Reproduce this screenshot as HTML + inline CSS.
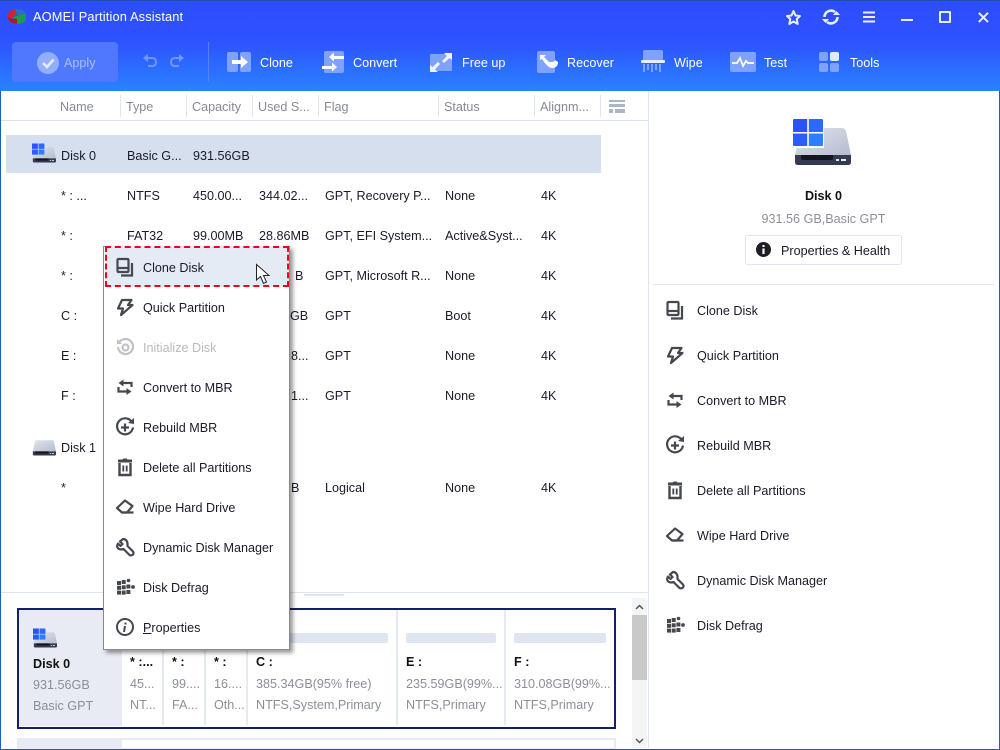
<!DOCTYPE html>
<html><head><meta charset="utf-8"><style>
html,body{margin:0;padding:0;background:#fff}
#p{position:relative;width:1000px;height:750px;overflow:hidden;background:#fff;font:12.6px/16px "Liberation Sans",sans-serif;color:#1a1a2a}
#p div{position:absolute;white-space:nowrap}
#p svg{position:absolute;overflow:visible}
.g{color:#8b8f99}
.h{color:#858a94;top:99px}
.w{color:#fff;top:55px}
.b{font-weight:bold;color:#111}
.s{position:absolute;background:#dfe5f0}
</style></head><body><div id="p">
<svg width="0" height="0" style="position:absolute"><defs>
<linearGradient id="dk" x1="0" y1="0" x2="1" y2="1"><stop offset="0" stop-color="#e0e4ec"/><stop offset="1" stop-color="#b4bcd0"/></linearGradient>
<symbol id="dbase" viewBox="0 0 58 46">
<path d="M8 9H49Q52 9 53 12L58 36H2Z" fill="url(#dk)"/>
<path d="M2 36H58V43Q58 46 55 46H5Q2 46 2 43Z" fill="#343a50"/>
<path d="M8 36H40V39Q40 41 38 41H10Q8 41 8 39Z" fill="#14161f"/>
<rect x="43" y="40" width="3" height="2" fill="#cfe0ff"/><rect x="48" y="40" width="5" height="2" fill="#e6efff"/>
</symbol>
<symbol id="dwin" viewBox="0 0 58 46">
<path d="M0 1Q0 0 1 0H14.200V13H0Z" fill="#2b52ff"/><path d="M15.800 0H29Q30 0 30 1V13H15.800Z" fill="#2a6aff"/>
<path d="M0 14.500H14.200V27H1Q0 27 0 26Z" fill="#2b5cff"/><path d="M15.800 14.500H30V26Q30 27 29 27H15.800Z" fill="#2a80ff"/>
</symbol>
<symbol id="i-clone" viewBox="0 0 20 20"><g fill="none" stroke="#45484f" stroke-width="2.200"><rect x="2.500" y="2" width="11" height="13" rx="1"/><path d="M3 11H13"/><path d="M17 6V18.500H6"/></g></symbol>
<symbol id="i-flash" viewBox="0 0 20 20"><path d="M7 3H16.500L13 8H17.500L6 18L8 11.500H3Z" fill="none" stroke="#45484f" stroke-width="2.200" stroke-linejoin="round"/></symbol>
<symbol id="i-init" viewBox="0 0 20 20"><g fill="none" stroke="#c0c2c7" stroke-width="2.200"><path d="M4.500 5A7.500 7.500 0 1 1 3 10"/><circle cx="10.500" cy="10.500" r="3"/></g><path d="M2 2V7H7Z" fill="#c0c2c7"/></symbol>
<symbol id="i-conv" viewBox="0 0 20 20"><g fill="none" stroke="#45484f" stroke-width="2.200"><path d="M8 6H16.500V10"/><path d="M3.500 10V14.500H12"/></g><path d="M8.500 2.500V9.500L3.500 6ZM11.500 11V18L16.500 14.500Z" fill="#45484f"/></symbol>
<symbol id="i-reb" viewBox="0 0 20 20"><g fill="none" stroke="#45484f" stroke-width="2.200"><path d="M16.500 4.500A8 8 0 1 0 18 10.500"/><path d="M10 6.500V14.500M6 10.500H14"/></g><path d="M13 6L19 7V1Z" fill="#45484f"/></symbol>
<symbol id="i-del" viewBox="0 0 20 20"><g fill="none" stroke="#45484f"><path d="M4.500 6V18H15.500V6" stroke-width="2.400"/><path d="M8.300 8.500V14.500M11.700 8.500V14.500" stroke-width="1.800"/></g><path d="M3 2.500H7.500L8.500 1.500H11.500L12.500 2.500H17V5.500H3Z" fill="#45484f"/></symbol>
<symbol id="i-wipe" viewBox="0 0 20 20"><path d="M2 11L10 3.500L17.500 9L12 15.500H7Z" fill="none" stroke="#45484f" stroke-width="2.200" stroke-linejoin="round"/><path d="M7 15.500H18.500" stroke="#45484f" stroke-width="2.200"/></symbol>
<symbol id="i-wr" viewBox="0 0 20 20"><path d="M8 2L5 4.500L7.500 7L5.500 9L3 6.500L2 9Q2.500 12.500 6.500 12.500L8.500 12L14.500 18Q16.500 19 18 17.500Q19 16 18 14.500L12.500 9L12.500 6Q11.500 2 8 2Z" fill="none" stroke="#45484f" stroke-width="2.200" stroke-linejoin="round"/></symbol>
<symbol id="i-def" viewBox="0 0 20 20"><g fill="#45484f"><rect x="2" y="4" width="4" height="4"/><rect x="6.700" y="3" width="4" height="4"/><circle cx="13.500" cy="3.500" r="1.800"/><rect x="2" y="8.800" width="4" height="4"/><rect x="6.700" y="8.300" width="4" height="4"/><rect x="11.400" y="7.500" width="4" height="4"/><circle cx="18" cy="10" r="1.900"/><rect x="2" y="13.600" width="4" height="4"/><rect x="6.700" y="13.600" width="4" height="4"/><rect x="11.400" y="13" width="4" height="4"/></g></symbol>
<symbol id="i-info" viewBox="0 0 20 20"><circle cx="10" cy="10" r="8" fill="none" stroke="#45484f" stroke-width="2"/><path d="M10.500 5.500V7.500M10 9L9 15" stroke="#45484f" stroke-width="2" fill="none"/></symbol>
</defs></svg>

<!-- header -->
<div style="left:0;top:0;width:1000px;height:91px;background:linear-gradient(#2d4dff 0,#2e52ff 45%,#2a82ff 100%)"></div>
<svg style="left:8px;top:8px" width="18" height="17" viewBox="0 0 18 17"><path d="M0 7Q1 2 7 1L9 6L3 10L0 10Z" fill="#d2232a"/><path d="M7 1Q14 0 18 5L15 8L9 7Z" fill="#2a6fc0"/><path d="M5 9L15 6L18 6V11Q17 15 9 16V11L5 11Z" fill="#1e9a48"/><path d="M0 10L9 11V16Q2 15 0 11Z" fill="#a81e24"/></svg>
<div style="left:33px;top:9px;color:#fff;font-size:12.8px;letter-spacing:.15px">AOMEI Partition Assistant</div>

<svg style="left:785px;top:9px" width="17" height="17" viewBox="0 0 17 17"><path d="M8.500 2L10.500 6.500L15 7L11.700 10L12.700 15L8.500 12.500L4.300 15L5.300 10L2 7L6.500 6.500Z" fill="none" stroke="#e8eeff" stroke-width="2" stroke-linejoin="round"/></svg>
<svg style="left:822px;top:8px" width="18" height="18" viewBox="0 0 18 18"><g fill="none" stroke="#e8eeff" stroke-width="2.600"><path d="M2.500 9A6.500 6.500 0 0 1 13 4"/><path d="M15.500 9A6.500 6.500 0 0 1 5 14"/></g><path d="M11 7H18L14.500 3ZM0 11H7L3.500 15Z" fill="#e8eeff"/></svg>
<svg style="left:863px;top:11px" width="13" height="12" viewBox="0 0 13 12"><path d="M0 1.500H12M0 6H12M0 10.500H12" stroke="#e8eeff" stroke-width="2"/></svg>
<div style="left:901px;top:19px;width:12px;height:2px;background:#e8eeff"></div>
<div style="left:939px;top:11px;width:8px;height:8px;border:2px solid #e8eeff;border-radius:1px"></div>
<svg style="left:978px;top:12px" width="11" height="11" viewBox="0 0 11 11"><path d="M.8 .8L10 10M10 .8L.8 10" stroke="#e8eeff" stroke-width="2"/></svg>

<!-- toolbar -->
<div style="left:12px;top:42px;width:106px;height:40px;background:#4f78ff;border-radius:4px"></div>
<svg style="left:37px;top:52px" width="22" height="22" viewBox="0 0 22 22"><circle cx="11" cy="11" r="11" fill="#93aeff"/><path d="M6 11L10 15L16.500 7.500" fill="none" stroke="#e4ebff" stroke-width="2.500"/></svg>
<div class="w" style="left:64px;color:#a9bfff">Apply</div>
<svg style="left:142px;top:54px" width="16" height="14" viewBox="0 0 16 14"><path d="M3 4H10Q14 4 14 8T10 12H6" fill="none" stroke="#6f97ff" stroke-width="2"/><path d="M6 0L1 4L6 8Z" fill="#6f97ff"/></svg>
<svg style="left:169px;top:54px" width="16" height="14" viewBox="0 0 16 14"><path d="M13 4H6Q2 4 2 8T6 12H10" fill="none" stroke="#6f97ff" stroke-width="2"/><path d="M10 0L15 4L10 8Z" fill="#6f97ff"/></svg>
<div style="left:208px;top:42px;width:1px;height:40px;background:#5580ff"></div>

<svg style="left:227px;top:52px" width="24" height="20" viewBox="0 0 24 20"><rect width="11" height="20" rx="2" fill="#7fa2ff"/><rect x="13" width="11" height="20" rx="2" fill="#7fa2ff"/><path d="M5 8H14V4L21 10L14 16V12H5Z" fill="#fff"/></svg>
<div class="w" style="left:260px">Clone</div>
<svg style="left:322px;top:51px" width="22" height="23" viewBox="0 0 22 23"><rect x="2" width="20" height="22" rx="2" fill="#7fa2ff"/><path d="M22 5H12V1.500L7 6L12 10.500V8H22ZM0 15H10V11.500L15 16L10 20.500V18H0Z" fill="#fff"/></svg>
<div class="w" style="left:353px">Convert</div>
<svg style="left:430px;top:53px" width="22" height="19" viewBox="0 0 22 19"><rect y="1" width="22" height="17" rx="1" fill="#7fa2ff"/><path d="M14 0H22V7L19.500 5L14 10L12 8L17 3ZM0 19V12L2.500 14L8 9L10 11L5 16.500L8 19Z" fill="#eef3ff"/></svg>
<div class="w" style="left:462px">Free up</div>
<svg style="left:537px;top:51px" width="22" height="22" viewBox="0 0 22 22"><rect width="18" height="22" rx="2" fill="#7fa2ff"/><path d="M3 9L3 4L9 4L7 6L12 11H15Q18 11 18 9L21 11Q21 17 15 17Q11 17 5 8Z" fill="#fff"/></svg>
<div class="w" style="left:567px">Recover</div>
<svg style="left:641px;top:50px" width="24" height="23" viewBox="0 0 24 23"><path d="M2 2Q2 0 4 0H20Q22 0 22 2V10H2Z" fill="#7fa2ff"/><rect y="10" width="24" height="3" rx="1" fill="#e6edff"/><path d="M3 14V22M7 14V20M11 14V22M15 14V20M19 14V22" stroke="#7fa2ff" stroke-width="2"/></svg>
<div class="w" style="left:674px">Wipe</div>
<svg style="left:730px;top:52px" width="26" height="20" viewBox="0 0 26 20"><rect width="26" height="20" rx="2" fill="#7fa2ff"/><path d="M2 11H7L10 6L13 14L16 9L18 11H24" fill="none" stroke="#fff" stroke-width="1.800"/></svg>
<div class="w" style="left:764px">Test</div>
<svg style="left:819px;top:52px" width="20" height="20" viewBox="0 0 20 20"><rect width="9" height="9" rx="2" fill="#7fa2ff"/><rect x="11" width="9" height="9" rx="2" fill="#dfe8ff"/><rect y="11" width="9" height="9" rx="2" fill="#7fa2ff"/><rect x="11" y="11" width="9" height="9" rx="2" fill="#7fa2ff"/></svg>
<div class="w" style="left:850px">Tools</div>

<!-- table head -->
<div class="h" style="left:60px">Name</div><div class="h" style="left:126px">Type</div><div class="h" style="left:192px">Capacity</div><div class="h" style="left:258px">Used S...</div><div class="h" style="left:324px">Flag</div><div class="h" style="left:444px">Status</div><div class="h" style="left:540px">Alignm...</div>
<div class="s" style="left:120px;top:95px;width:1px;height:22px"></div><div class="s" style="left:186px;top:95px;width:1px;height:22px"></div><div class="s" style="left:252px;top:95px;width:1px;height:22px"></div><div class="s" style="left:318px;top:95px;width:1px;height:22px"></div><div class="s" style="left:438px;top:95px;width:1px;height:22px"></div><div class="s" style="left:534px;top:95px;width:1px;height:22px"></div><div class="s" style="left:600px;top:95px;width:1px;height:22px"></div>
<svg style="left:609px;top:100px" width="16" height="13" viewBox="0 0 16 13"><path d="M0 0H16V2H0ZM0 4H16V7H0ZM0 9H4V13H0ZM6 9H16V13H6Z" fill="#a9b5c8"/></svg>
<div class="s" style="left:1px;top:120px;width:647px;height:1px;background:#d9e0ec"></div>
<div class="s" style="left:648px;top:91px;width:1px;height:657px;background:#dfe5f0"></div>

<!-- rows -->
<div style="left:6px;top:135px;width:595px;height:38px;background:#d5dfed"></div>
<svg style="left:32px;top:143px" width="24" height="20" viewBox="0 0 58 46"><use href="#dbase" width="58" height="46"/><use href="#dwin" width="58" height="46"/></svg>
<div style="left:61px;top:148px">Disk 0</div><div style="left:127px;top:148px">Basic G...</div><div style="left:193px;top:148px">931.56GB</div>

<div style="left:61px;top:188px">* : ...</div><div style="left:127px;top:188px">NTFS</div><div style="left:193px;top:188px">450.00...</div><div style="left:259px;top:188px">344.02...</div><div style="left:325px;top:188px">GPT, Recovery P...</div><div style="left:445px;top:188px">None</div><div style="left:541px;top:188px">4K</div>
<div style="left:61px;top:228px">* :</div><div style="left:127px;top:228px">FAT32</div><div style="left:193px;top:228px">99.00MB</div><div style="left:259px;top:228px">28.86MB</div><div style="left:325px;top:228px">GPT, EFI System...</div><div style="left:445px;top:228px">Active&amp;Syst...</div><div style="left:541px;top:228px">4K</div>
<div style="left:61px;top:268px">* :</div><div style="left:295px;top:268px">B</div><div style="left:325px;top:268px">GPT, Microsoft R...</div><div style="left:445px;top:268px">None</div><div style="left:541px;top:268px">4K</div>
<div style="left:61px;top:308px">C :</div><div style="left:290px;top:308px">GB</div><div style="left:325px;top:308px">GPT</div><div style="left:445px;top:308px">Boot</div><div style="left:541px;top:308px">4K</div>
<div style="left:61px;top:348px">E :</div><div style="left:291px;top:348px">8...</div><div style="left:325px;top:348px">GPT</div><div style="left:445px;top:348px">None</div><div style="left:541px;top:348px">4K</div>
<div style="left:61px;top:388px">F :</div><div style="left:291px;top:388px">1...</div><div style="left:325px;top:388px">GPT</div><div style="left:445px;top:388px">None</div><div style="left:541px;top:388px">4K</div>
<svg style="left:32px;top:436px" width="24" height="20" viewBox="0 0 58 46"><use href="#dbase" width="58" height="46"/></svg>
<div style="left:61px;top:440px">Disk 1</div>
<div style="left:61px;top:480px">*</div><div style="left:291px;top:480px">B</div><div style="left:325px;top:480px">Logical</div><div style="left:445px;top:480px">None</div><div style="left:541px;top:480px">4K</div>

<!-- bottom panel -->
<div class="s" style="left:1px;top:592px;width:647px;height:1px"></div>
<div class="s" style="left:304px;top:594px;width:40px;height:2px"></div>
<div style="left:19px;top:610px;width:103px;height:116px;background:#e8ebf3"></div>
<div style="left:17px;top:608px;width:595px;height:117px;border:2px solid #13216a"></div>
<div class="s" style="left:162px;top:610px;width:2px;height:115px;background:#e6ebf3"></div>
<div class="s" style="left:204px;top:610px;width:2px;height:115px;background:#e6ebf3"></div>
<div class="s" style="left:246px;top:610px;width:2px;height:115px;background:#e6ebf3"></div>
<div class="s" style="left:396px;top:610px;width:2px;height:115px;background:#e6ebf3"></div>
<div class="s" style="left:504px;top:610px;width:2px;height:115px;background:#e6ebf3"></div>
<div class="s" style="left:122px;top:633px;width:40px;height:10px;background:#dfe6f1"></div>
<div class="s" style="left:255px;top:633px;width:133px;height:10px;background:#dfe6f1;border-radius:2px"></div>
<div class="s" style="left:406px;top:633px;width:90px;height:10px;background:#dfe6f1;border-radius:2px"></div>
<div class="s" style="left:514px;top:633px;width:92px;height:10px;background:#dfe6f1;border-radius:2px"></div>
<svg style="left:33px;top:628px" width="24" height="20" viewBox="0 0 58 46"><use href="#dbase" width="58" height="46"/><use href="#dwin" width="58" height="46"/></svg>
<div class="b" style="left:33px;top:656px">Disk 0</div>
<div class="g" style="left:33px;top:677px">931.56GB</div><div class="g" style="left:33px;top:698px">Basic GPT</div>
<div class="b" style="left:130px;top:654px">* :...</div><div class="g" style="left:130px;top:676px">45...</div><div class="g" style="left:130px;top:697px">NT...</div>
<div class="b" style="left:172px;top:654px">* :</div><div class="g" style="left:172px;top:676px">99....</div><div class="g" style="left:172px;top:697px">FA...</div>
<div class="b" style="left:214px;top:654px">* :</div><div class="g" style="left:214px;top:676px">16....</div><div class="g" style="left:214px;top:697px">Oth...</div>
<div class="b" style="left:256px;top:654px">C :</div><div class="g" style="left:256px;top:676px">385.34GB(95% free)</div><div class="g" style="left:256px;top:697px">NTFS,System,Primary</div>
<div class="b" style="left:406px;top:654px">E :</div><div class="g" style="left:406px;top:676px">235.59GB(99%...</div><div class="g" style="left:406px;top:697px">NTFS,Primary</div>
<div class="b" style="left:514px;top:654px">F :</div><div class="g" style="left:514px;top:676px">310.08GB(99%...</div><div class="g" style="left:514px;top:697px">NTFS,Primary</div>
<div style="left:17px;top:738px;width:599px;height:12px;border:2px solid #e8ebf3;box-sizing:border-box"></div>
<div style="left:19px;top:740px;width:103px;height:10px;background:#e8ebf3"></div>
<div style="left:632px;top:598px;width:15px;height:150px;background:#f4f5f7"></div>
<div style="left:632px;top:615px;width:15px;height:65px;background:#c9c9c9"></div>
<svg style="left:635px;top:604px" width="9" height="6" viewBox="0 0 9 6"><path d="M1 5L4.500 1.500L8 5" fill="none" stroke="#555" stroke-width="1.500"/></svg>
<svg style="left:635px;top:738px" width="9" height="6" viewBox="0 0 9 6"><path d="M1 1L4.500 4.500L8 1" fill="none" stroke="#555" stroke-width="1.500"/></svg>

<!-- right panel -->
<svg style="left:793px;top:119px" width="58" height="46" viewBox="0 0 58 46"><use href="#dbase" width="58" height="46"/><rect x="-1" y="-1" width="32" height="30" fill="#fff"/><use href="#dwin" width="58" height="46"/></svg>
<div class="b" style="left:649px;top:188px;width:349px;text-align:center">Disk 0</div>
<div class="g" style="left:649px;top:211px;width:349px;text-align:center">931.56 GB,Basic GPT</div>
<div style="left:745px;top:235px;width:155px;height:28px;border:1px solid #dfe4ee;border-radius:3px"></div>
<svg style="left:756px;top:242px" width="15" height="15" viewBox="0 0 15 15"><circle cx="7.500" cy="7.500" r="7.500" fill="#1e1e26"/><path d="M7.500 3V5M7.500 6.500V12" stroke="#fff" stroke-width="2.200"/></svg>
<div style="left:781px;top:243px">Properties &amp; Health</div>
<div class="s" style="left:653px;top:284px;width:341px;height:1px"></div>

<svg style="left:665px;top:300px" width="20" height="20"><use href="#i-clone"/></svg><div style="left:697px;top:303px">Clone Disk</div>
<svg style="left:665px;top:345px" width="20" height="20"><use href="#i-flash"/></svg><div style="left:697px;top:348px">Quick Partition</div>
<svg style="left:665px;top:390px" width="20" height="20"><use href="#i-conv"/></svg><div style="left:697px;top:393px">Convert to MBR</div>
<svg style="left:665px;top:435px" width="20" height="20"><use href="#i-reb"/></svg><div style="left:697px;top:438px">Rebuild MBR</div>
<svg style="left:665px;top:480px" width="20" height="20"><use href="#i-del"/></svg><div style="left:697px;top:483px">Delete all Partitions</div>
<svg style="left:665px;top:525px" width="20" height="20"><use href="#i-wipe"/></svg><div style="left:697px;top:528px">Wipe Hard Drive</div>
<svg style="left:665px;top:570px" width="20" height="20"><use href="#i-wr"/></svg><div style="left:697px;top:573px">Dynamic Disk Manager</div>
<svg style="left:665px;top:615px" width="20" height="20"><use href="#i-def"/></svg><div style="left:697px;top:618px">Disk Defrag</div>

<!-- context menu -->
<div style="left:103px;top:246px;width:185px;height:402px;background:#fff;border:1px solid #8a8a8a;box-shadow:3px 3px 4px rgba(0,0,0,.4)"></div>
<div style="left:105px;top:246px;width:180px;height:37px;background:#e4ebf5;border:2px dashed #f0001e"></div>
<svg style="left:115px;top:257px" width="20" height="20"><use href="#i-clone"/></svg><div style="left:143px;top:260px">Clone Disk</div>
<svg style="left:115px;top:297px" width="20" height="20"><use href="#i-flash"/></svg><div style="left:143px;top:300px">Quick Partition</div>
<svg style="left:115px;top:337px" width="20" height="20"><use href="#i-init"/></svg><div style="left:143px;top:340px;color:#b8bac0">Initialize Disk</div>
<svg style="left:115px;top:377px" width="20" height="20"><use href="#i-conv"/></svg><div style="left:143px;top:380px">Convert to MBR</div>
<svg style="left:115px;top:417px" width="20" height="20"><use href="#i-reb"/></svg><div style="left:143px;top:420px">Rebuild MBR</div>
<svg style="left:115px;top:457px" width="20" height="20"><use href="#i-del"/></svg><div style="left:143px;top:460px">Delete all Partitions</div>
<svg style="left:115px;top:497px" width="20" height="20"><use href="#i-wipe"/></svg><div style="left:143px;top:500px">Wipe Hard Drive</div>
<svg style="left:115px;top:537px" width="20" height="20"><use href="#i-wr"/></svg><div style="left:143px;top:540px">Dynamic Disk Manager</div>
<svg style="left:115px;top:577px" width="20" height="20"><use href="#i-def"/></svg><div style="left:143px;top:580px">Disk Defrag</div>
<svg style="left:115px;top:617px" width="20" height="20"><use href="#i-info"/></svg><div style="left:143px;top:620px"><u>P</u>roperties</div>
<svg style="left:256px;top:264px" width="14" height="21" viewBox="0 0 14 21"><path d="M.5 .5V16L4.500 12.500L7.500 19.500L10.500 18L7.500 11.500H13Z" fill="#fff" stroke="#222" stroke-width="1"/></svg>

<!-- window border -->
<div style="left:0;top:0;width:1000px;height:1px;background:#1a4fb0"></div>
<div style="left:0;top:91px;width:1px;height:659px;background:#1660c0"></div>
<div style="left:999px;top:91px;width:1px;height:659px;background:#1660c0"></div>
<div style="left:0;top:749px;width:1000px;height:1px;background:#1660c0"></div>
</div></body></html>
